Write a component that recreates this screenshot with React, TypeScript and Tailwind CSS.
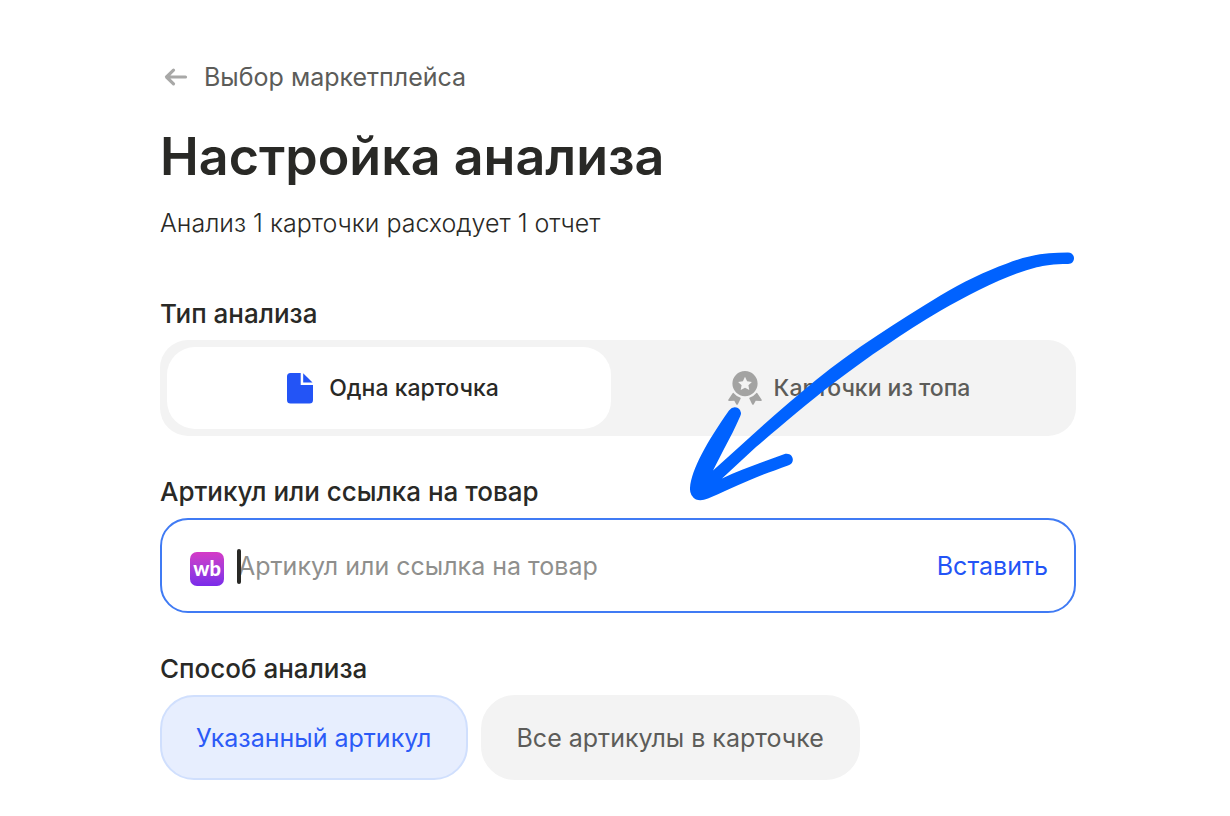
import { useState } from "react"
import clsx from "clsx"

type AnalysisType = "single" | "top"
type Method = "article" | "all"

function BackIcon() {
  return (
    <svg width="32" height="32" viewBox="0 0 32 32" fill="none" aria-hidden="true">
      <path
        d="M25.5 16H7M13.5 9.2L6.5 16L13.5 22.8"
        stroke="#a8a8a7"
        strokeWidth="3.2"
        strokeLinecap="round"
        strokeLinejoin="round"
      />
    </svg>
  )
}

function FileIcon() {
  return (
    <svg width="40" height="40" viewBox="0 0 40 40" fill="#2354f6" aria-hidden="true">
      <path d="M12 5H21.7V17H34V32A3.5 3.5 0 0 1 30.5 35.5H11.500A3.5 3.500 0 0 1 8 32V8.500A3.500 3.500 0 0 1 11.500 5Z" />
      <path d="M24.2 5.300L33.500 14.500H24.200Z" />
    </svg>
  )
}

function MedalIcon() {
  return (
    <svg width="40" height="40" viewBox="-4 -3 40 40" fill="#a3a3a2" aria-hidden="true">
      <path
        fillRule="evenodd"
        d="M17 0A12.6 12.6 0 1 1 17 25.2A12.6 12.6 0 1 1 17 0ZM17 5.8L14.9 10.3L10.1 10.9L13.6 14.2L12.7 19.1L17 16.7L21.3 19.1L20.4 14.2L23.9 10.9L19.1 10.3Z"
      />
      <path d="M4.6 22.2Q5.4 21.4 6.1 22.4Q8.8 25.6 12.1 26.4Q13.1 26.8 12.7 27.6L9.9 33.2Q9 34.4 8.2 33.2L6.3 29.7L1.2 30Q-0.2 30 0.3 28.8Z" />
      <path d="M29.4 22.2Q28.6 21.4 27.9 22.4Q25.2 25.6 21.9 26.4Q20.9 26.8 21.3 27.6L24.1 33.2Q25 34.4 25.8 33.2L27.7 29.7L32.8 30Q34.2 30 33.7 28.8Z" />
    </svg>
  )
}

// hand drawn pointer that lies over the form
function PointerArrow() {
  return (
    <svg
      className="pointer-events-none absolute right-[154px] top-[252px]"
      width="388"
      height="250"
      viewBox="0 0 388 250"
      fill="#0062ff"
      aria-hidden="true"
    >
      <path d="M380 0.5C388 0.5 388 12 380 12C366 12 356 13.5 348.7 15.3C318 23 284 41 252 59C215 81 180 105 147 130C118 152 93 174 68 195L34 226.5C54 217 75 210 96 202.3C105 199.5 108.500 211 100 213.500C88 218 76 222 62 228C47 234 33 241 20 246.500Q13 249.500 8 247.500Q1.500 244 2 236C3.500 217 19 190 41 158.500Q45 153.500 50 156Q54.500 159 52.300 164C48 174 42 186 36 197L25 218.500L50 196C75 173 100 151 128 128C165 98 210 69 252 43.700C275 30 297 19.500 319 11.500C340 3 358 0.500 380 0.500Z" />
    </svg>
  )
}

const LABEL = "block text-[26px] font-medium leading-8"

export default function App() {
  const [type, setType] = useState<AnalysisType>("single")
  const [method, setMethod] = useState<Method>("article")
  const [value, setValue] = useState("")

  const tabClass = (active: boolean) =>
    clsx(
      "flex flex-1 items-center justify-center gap-[10px] rounded-[28px] text-[23px] font-medium leading-8",
      active ? "bg-white text-[#292926]" : "text-[#5c5c59]"
    )

  const chipClass = (active: boolean) =>
    clsx(
      "flex h-[85px] items-center rounded-[34px] border-2 px-[34px] text-[25px]",
      active
        ? "border-[#d0dffd] bg-[#e7eefe] text-[#2b5af7]"
        : "border-[#f3f3f3] bg-[#f3f3f3] text-[#5c5c59]"
    )

  return (
    <main className="min-h-screen bg-white font-['Inter',sans-serif] text-[#292926]">
      <div className="relative pb-9 pl-40 pr-[154px] pt-[61px]">
        <a href="#marketplace" className="flex w-fit items-center gap-3 text-[25px] leading-8 text-[#5c5c59]">
          <BackIcon />
          Выбор маркетплейса
        </a>

        <h1 className="mt-8 text-[52px] font-semibold leading-16">Настройка анализа</h1>
        <p className="mt-[18px] text-[25px] font-[350] leading-8">Анализ 1 карточки расходует 1 отчет</p>

        {/* Analysis type */}
        <section className="mt-[59px]">
          <h2 className={LABEL}>Тип анализа</h2>
          <div className="mt-[10px] flex h-24 gap-[14px] rounded-[28px] bg-[#f3f3f3] p-[7px]">
            <button type="button" onClick={() => setType("single")} className={tabClass(type === "single")}>
              <FileIcon />
              Одна карточка
            </button>
            <button type="button" onClick={() => setType("top")} className={tabClass(type === "top")}>
              <MedalIcon />
              Карточки из топа
            </button>
          </div>
        </section>

        {/* Product link */}
        <section className="mt-10">
          <label htmlFor="article" className={LABEL}>
            Артикул или ссылка на товар
          </label>
          <div className="mt-[10px] flex h-[95px] items-center rounded-[28px] border-2 border-[#407bf4] pl-7 pr-[26px]">
            <span className="mt-[6px] flex size-[34px] shrink-0 items-center justify-center rounded-[7px] bg-linear-to-b from-[#d539c6] to-[#7a2aea] pb-[2px] font-['Lato',sans-serif] text-[20px] font-black leading-5 text-white">
              wb
            </span>
            <div className="relative ml-[14px] flex-1">
              <input
                id="article"
                type="text"
                value={value}
                onChange={(e) => setValue(e.target.value)}
                placeholder="Артикул или ссылка на товар"
                className="w-full bg-transparent text-[25px] leading-8 outline-none placeholder:text-[#8f8f8d]"
              />
              {value === "" && <span className="absolute -left-px -top-px h-[35px] w-1 rounded-full bg-[#292926]" />}
            </div>
            <button type="button" className="text-[25px] leading-8 text-[#2354f6]">
              Вставить
            </button>
          </div>
        </section>

        {/* Method */}
        <section className="mt-10">
          <h2 className={LABEL}>Способ анализа</h2>
          <div className="mt-[10px] flex gap-[13px]">
            <button type="button" onClick={() => setMethod("article")} className={chipClass(method === "article")}>
              <span className="overflow-hidden leading-7">Указанный артикул</span>
            </button>
            <button type="button" onClick={() => setMethod("all")} className={chipClass(method === "all")}>
              <span className="overflow-hidden leading-7">Все артикулы в карточке</span>
            </button>
          </div>
        </section>

        <PointerArrow />
      </div>
    </main>
  )
}
